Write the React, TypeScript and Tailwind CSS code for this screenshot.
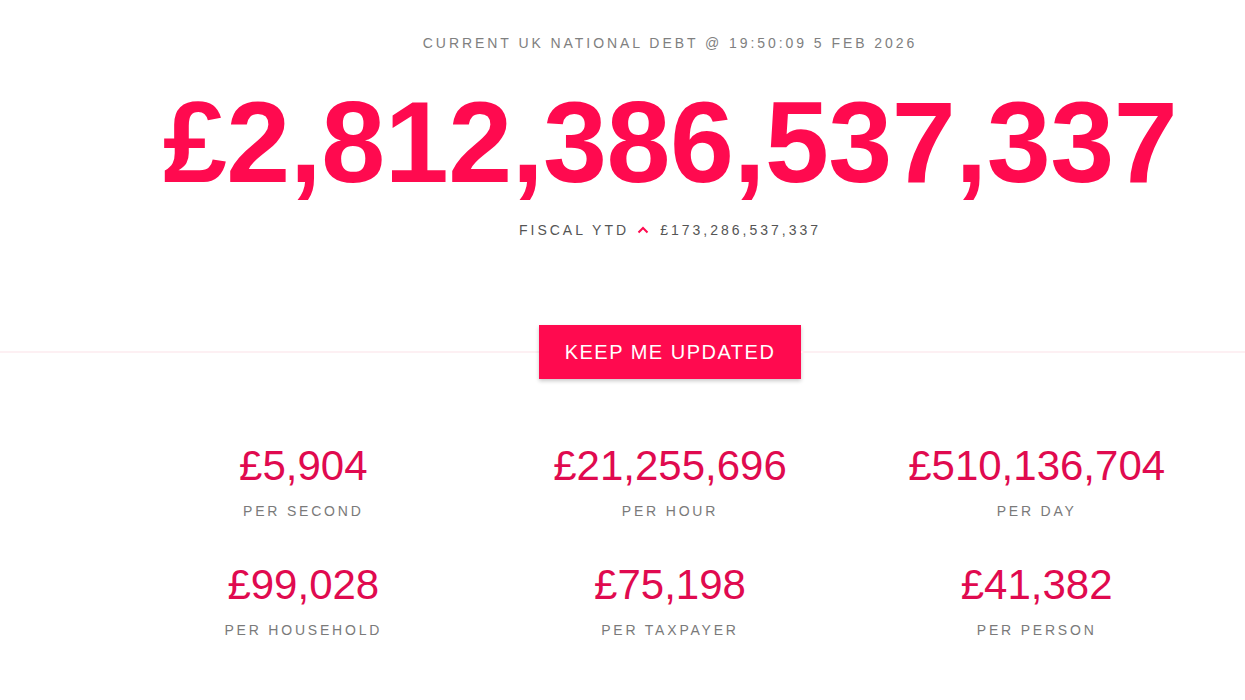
import React from "react";

const stats = [
  { value: "£5,904", label: "PER SECOND" },
  { value: "£21,255,696", label: "PER HOUR" },
  { value: "£510,136,704", label: "PER DAY" },
  { value: "£99,028", label: "PER HOUSEHOLD" },
  { value: "£75,198", label: "PER TAXPAYER" },
  { value: "£41,382", label: "PER PERSON" },
];

export default function App() {
  return (
    <div
      className="min-h-[700px] w-full bg-white"
      style={{ fontFamily: '"Liberation Sans", Arial, sans-serif' }}
    >
      <div className="pl-[95px]">
        <div className="pt-[33px] text-center text-[14px] leading-[20px] tracking-[0.21em] text-[#808080]">
          CURRENT UK NATIONAL DEBT @ 19:50:09 5 FEB 2026
        </div>
        <div className="mt-[32px] text-center text-[115px] font-bold leading-[115px] tracking-[-0.5px] text-[#ff0a4f] whitespace-nowrap">
          £2,812,386,537,337
        </div>
        <div className="mt-[20px] flex items-center justify-center text-[14px] leading-[20px] tracking-[3px] text-[#555]">
          <span>FISCAL YTD</span>
          <svg
            className="ml-[8px] mr-[11px]"
            width="12"
            height="8"
            viewBox="0 0 12 8"
            fill="none"
          >
            <path
              d="M1.5 6.5 L6 2 L10.5 6.5"
              stroke="#ff0a4f"
              strokeWidth="2"
            />
          </svg>
          <span>£173,286,537,337</span>
        </div>
      </div>

      <div className="mt-[85px] flex items-center">
        <div className="h-[2px] w-[95px] bg-[#fdf0f3]" />
        <div className="h-[2px] flex-1 bg-[#fdf0f3]" />
        <button className="flex h-[54px] w-[262px] items-center justify-center bg-[#ff0a4f] text-[20px] tracking-[1.5px] text-white shadow-[0_2px_4px_rgba(0,0,0,0.22)]">
          KEEP ME UPDATED
        </button>
        <div className="h-[2px] flex-1 bg-[#fdf0f3]" />
      </div>

      <div className="pl-[95px]">
        <div className="mx-auto mt-[63px] grid w-[1100px] grid-cols-3 gap-y-[40px]">
          {stats.map((s) => (
            <div key={s.label} className="flex flex-col items-center">
              <div className="text-[42px] leading-[48px] text-[#e00a4f]">
                {s.value}
              </div>
              <div className="mt-[11px] text-[14px] leading-[20px] tracking-[0.2em] text-[#7a7a7a]">
                {s.label}
              </div>
            </div>
          ))}
        </div>
      </div>
    </div>
  );
}
